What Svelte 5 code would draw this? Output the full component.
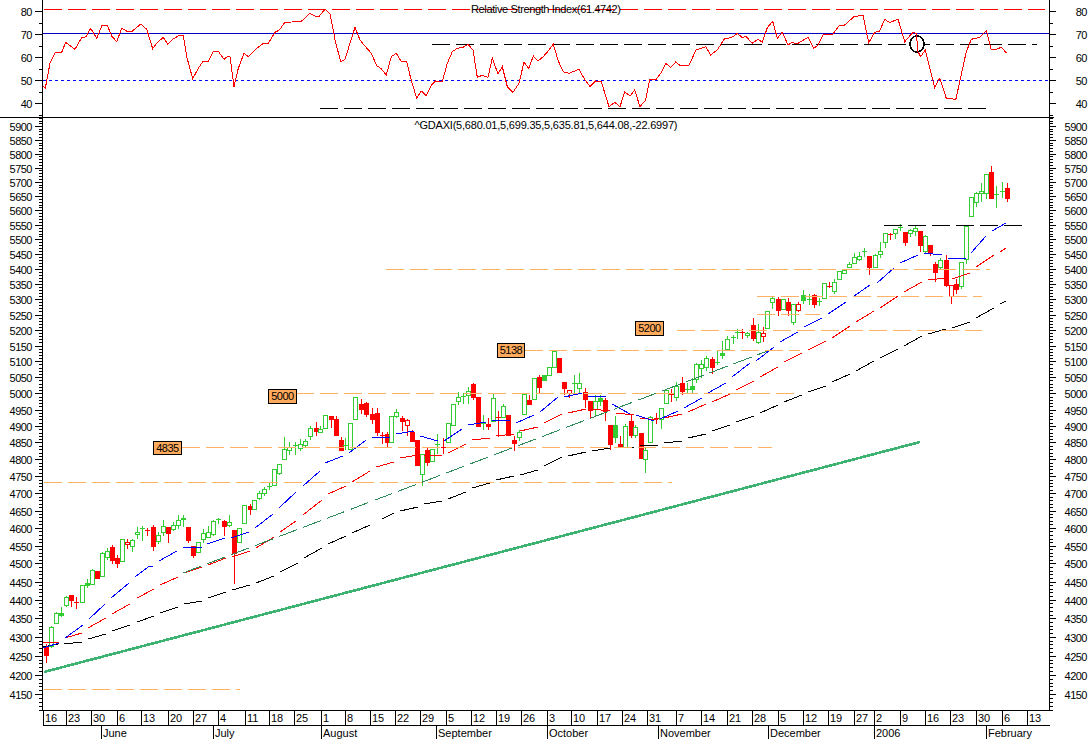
<script>
  const W = 1092, H = 739;
  const L = 42.5, R = 1049.5;

  // RSI series read per reference crop (3x crop units, x offset of the crop)
  const rsiParts = [
    [0, [128,258,136,265,150,190,165,158,185,157,197,127,225,148,245,113,258,110,272,85,290,115,306,76,322,76,335,108,350,125,365,85,385,96,395,95,422,72,440,88,458,146,470,130,490,112,503,133,518,118,535,108,550,106,560,170,578,236,595,205,608,185,625,185,640,154,655,154,672,178,685,168,690,170,702,260,715,205,732,160,745,170,770,145,790,130,805,130,825,97,838,90,855,67,875,66,905,63,930,40,945,48,958,48,975,28,990,42,1000,90,1005,120,1022,185,1035,178,1050,130,1065,82,1080,120,1092,135]],
    [364, [22,160,38,197,50,205,67,225,82,170,97,160,112,185,128,185,140,235,158,295,172,273,187,287,203,255,215,243,235,245,250,190,265,155,280,145,297,142,312,133,327,150,340,232,355,226,372,232,385,175,402,222,415,200,430,260,447,277,465,250,480,186,494,205,508,168,522,183,538,170,555,150,568,133,583,183,598,215,615,220,645,208,660,235,678,260,695,243,712,245,735,320,752,307,768,320,782,275,798,288,812,270,828,320,845,300,857,238,875,240,890,220,905,190,920,202,935,186,950,198,975,196,996,150,1025,140,1040,165,1060,150,1082,115]],
    [728, [0,115,15,110,28,100,42,112,55,110,72,130,90,118,103,127,118,83,134,64,148,115,163,97,180,135,192,127,207,132,240,112,257,145,270,135,287,102,315,102,335,75,350,75,378,50,405,46,422,128,440,97,455,93,470,58,485,68,510,57,530,125,555,97,565,100,570,155,578,170,592,150,620,262,635,235,655,295,670,295,683,300,715,155,730,118,755,112,775,92,790,150,805,148,820,142,836,160]]
  ];
  let rsiPts = [];
  for (const [ox, a] of rsiParts) {
    for (let i = 0; i < a.length; i += 2) rsiPts.push(`${(ox + a[i] / 3).toFixed(1)},${(a[i + 1] / 3).toFixed(1)}`);
  }
  const rsiLine = rsiPts.join(' ');

  // candles: x, bodyTop, bodyBottom, high, low, kind (g hollow green, G solid green, r solid red, h hollow red)
  const candles = [
    [46,646,655,644,662,'r'],[51,627,646,626,647,'g'],[56,613,623,612,623,'g'],[61,613,615,607,616,'G'],[66,597,605,596,606,'g'],[71,595,600,595,606,'r'],[76,602,602,597,608,'r'],[82,585,602,585,602,'g'],[87,583,585,579,587,'G'],[92,570,584,569,584,'g'],[97,571,578,571,578,'r'],[102,553,576,552,576,'g'],[107,551,557,548,559,'g'],[112,547,560,545,563,'r'],[117,558,563,555,567,'r'],[122,539,561,539,561,'g'],[127,542,544,539,548,'h'],[132,540,546,539,551,'g'],[137,532,534,527,538,'g'],[142,528,528,526,540,'G'],[147,530,530,528,535,'r'],[153,527,546,525,550,'r'],[158,535,541,532,543,'g'],[163,526,532,520,535,'g'],[168,527,533,527,542,'r'],[173,525,529,522,530,'g'],[178,520,525,515,528,'g'],[183,518,519,515,526,'G'],[188,527,540,527,542,'r'],[193,546,555,546,557,'r'],[198,542,552,542,552,'g'],[203,533,539,529,542,'g'],[208,532,537,526,537,'g'],[213,521,534,520,535,'g'],[218,519,519,518,523,'G'],[224,521,526,520,535,'r'],[229,522,525,515,526,'g'],[234,530,553,530,583,'r'],[239,528,542,528,542,'g'],[244,505,523,505,523,'g'],[250,506,509,504,514,'r'],[254,500,509,500,509,'g'],[259,493,498,491,499,'g'],[264,489,493,487,495,'g'],[269,486,486,482,489,'G'],[274,469,485,469,485,'g'],[279,464,473,464,474,'g'],[284,449,459,437,459,'g'],[289,447,450,442,454,'g'],[295,445,445,442,454,'G'],[300,444,448,439,450,'g'],[305,441,445,439,446,'g'],[310,428,436,426,439,'g'],[316,428,431,422,435,'r'],[320,429,432,426,432,'g'],[325,415,428,415,428,'g'],[331,416,419,416,427,'r'],[336,419,435,416,435,'r'],[341,440,450,437,450,'r'],[345,445,445,438,449,'G'],[350,423,449,423,449,'g'],[355,397,419,397,419,'g'],[361,404,409,399,413,'r'],[366,403,414,402,416,'r'],[372,414,419,408,423,'r'],[377,413,432,408,435,'r'],[382,435,435,432,443,'r'],[387,434,442,432,447,'r'],[391,416,442,416,442,'g'],[396,412,416,409,417,'g'],[402,418,421,416,430,'r'],[407,420,425,419,435,'h'],[412,432,441,430,441,'r'],[417,440,465,440,465,'r'],[422,454,474,454,485,'g'],[427,450,462,448,465,'r'],[432,449,461,449,461,'g'],[437,444,444,434,453,'G'],[443,447,447,438,453,'r'],[448,423,442,423,442,'g'],[453,404,425,404,425,'g'],[458,397,401,392,404,'g'],[463,396,396,393,403,'G'],[468,391,395,387,403,'g'],[473,384,397,383,399,'r'],[478,397,426,397,426,'r'],[483,423,423,415,429,'G'],[488,424,426,418,429,'r'],[493,398,421,394,421,'g'],[498,417,417,411,436,'r'],[503,406,417,404,417,'g'],[508,415,435,415,435,'r'],[514,440,443,436,450,'r'],[519,432,437,430,440,'g'],[524,394,414,394,414,'g'],[529,400,404,395,404,'r'],[534,378,399,378,399,'g'],[539,377,387,375,393,'r'],[544,375,380,375,380,'G'],[549,367,375,367,375,'g'],[554,351,367,351,367,'g'],[559,358,372,358,372,'r'],
    [564,382,388,382,394,'r'],[569,390,393,390,397,'h'],[574,383,383,375,392,'G'],[579,383,388,373,392,'g'],[585,392,399,388,407,'r'],[590,401,410,401,417,'r'],[595,401,409,395,415,'g'],[600,398,401,395,405,'G'],[605,400,411,398,420,'r'],[610,425,444,425,449,'r'],[615,425,437,416,442,'G'],[620,444,447,436,447,'r'],[625,426,447,424,447,'g'],[631,421,435,415,437,'r'],[635,427,435,425,437,'g'],[641,433,458,433,458,'r'],[645,450,459,447,472,'g'],[650,417,442,416,442,'g'],[656,418,418,413,423,'r'],[661,408,419,408,428,'g'],[666,390,403,390,403,'g'],[671,394,394,389,401,'r'],[676,386,397,382,400,'g'],[682,383,391,377,394,'r'],[687,389,389,383,393,'G'],[692,386,389,378,392,'G'],[696,364,379,363,382,'g'],[701,364,368,360,377,'g'],[706,358,367,356,370,'g'],[712,359,367,357,373,'r'],[717,362,362,350,364,'G'],[722,353,355,341,358,'G'],[727,339,349,336,350,'g'],[733,337,337,335,343,'G'],[737,332,332,329,338,'G'],[742,332,332,329,338,'r'],[747,333,335,332,337,'g'],[753,325,338,318,340,'r'],[758,332,342,324,343,'g'],[763,333,336,327,341,'h'],[767,311,328,311,328,'g'],[772,298,302,296,308,'g'],[778,299,310,297,315,'r'],[783,299,309,299,309,'g'],[788,302,310,298,315,'r'],[793,304,322,304,324,'g'],[798,304,310,302,311,'h'],[803,295,300,290,303,'G'],[809,299,299,294,304,'G'],[814,295,304,294,307,'r'],[819,301,301,298,305,'G'],[824,283,298,283,298,'g'],[829,286,286,282,287,'r'],[834,282,291,279,293,'g'],[839,271,279,271,279,'g'],[844,270,273,270,273,'g'],[849,264,267,262,267,'g'],[854,257,263,253,263,'g'],[859,256,259,252,260,'g'],[864,251,251,248,256,'G'],[869,256,267,256,274,'r'],[875,255,267,254,267,'g'],[880,251,254,242,257,'g'],[885,233,242,233,247,'g'],[890,234,234,233,239,'r'],[895,229,233,229,238,'g'],[900,227,227,224,230,'G'],[905,232,242,232,245,'r'],[910,230,233,229,236,'g'],[915,228,231,226,235,'g'],[920,231,245,231,251,'r'],[925,236,251,235,252,'g'],[930,245,252,245,255,'r'],[935,264,272,262,281,'r'],[940,260,267,258,268,'g'],[946,260,285,255,286,'r'],[951,285,296,285,303,'h'],[956,284,289,279,293,'r'],[961,262,286,262,288,'g'],[966,226,259,226,263,'g'],[971,197,216,197,216,'g'],[976,193,202,192,206,'g'],[981,191,193,183,201,'g'],[986,174,193,174,198,'g'],[991,172,198,166,198,'r'],[996,194,194,186,207,'G'],[1002,191,191,182,197,'G'],[1007,188,198,183,201,'r']
  ];

  const blue = [[43,648,59,643],[65,638,83,625],[89,619,105,604],[111,598,129,583],[135,577,148,567],[148,567,153,566],[159,561,177,551],[183,547,202,547],[207,544,225,538],[231,538,249,532],[255,528,273,514],[279,508,296,492],[303,486,320,471],[325,463,343,456],[349,453,366,440],[372,438,390,437],[396,434,414,431],[420,436,438,441],[444,441,462,429],[468,425,486,422],[492,421,510,420],[516,423,534,415],[540,412,558,397],[564,397,582,393],[588,396,606,397],[612,404,630,414],[636,415,654,421],[660,419,678,411],[684,408,702,398],[708,393,726,383],[732,377,750,363],[756,361,774,347],[780,342,798,332],[804,327,822,318],[828,314,846,302],[854,296,870,285],[877,283,894,268],[900,263,918,255],[924,253,942,255],[948,258,966,258],[971,253,986,236],[992,231,1006,223]];
  const red = [[43,643,59,642],[65,638,82,633],[88,628,106,618],[112,614,130,604],[137,598,154,589],[160,585,178,577],[184,573,202,567],[208,565,226,558],[232,557,250,551],[256,548,274,537],[280,532,296,521],[303,515,322,500],[328,494,346,486],[352,482,370,471],[376,467,394,462],[400,458,418,455],[424,456,442,455],[448,453,466,444],[472,440,490,438],[496,436,514,434],[520,431,538,427],[544,423,562,414],[568,413,586,409],[592,409,610,411],[616,413,634,415],[640,418,658,420],[664,418,682,414],[688,412,706,404],[712,402,730,394],[736,390,754,381],[760,377,778,367],[784,362,802,353],[808,350,826,341],[832,338,850,326],[856,322,874,311],[880,308,898,296],[904,292,922,282],[928,280,946,278],[952,279,970,273],[976,267,994,255],[1000,252,1006,248]];
  const black = [[43,647,58,644],[64,644,82,642],[88,639,106,634],[112,631,130,625],[137,622,154,616],[160,613,178,607],[184,604,202,601],[208,598,226,592],[232,590,250,585],[256,583,274,576],[280,572,298,563],[304,558,322,548],[328,544,346,536],[352,533,370,525],[382,519,394,513],[400,511,418,507],[424,504,442,501],[448,499,466,492],[472,488,490,483],[496,480,514,476],[520,475,538,470],[544,466,562,457],[568,456,586,452],[592,451,610,448],[616,447,634,447],[640,446,658,445],[664,443,682,441],[688,438,706,434],[712,431,730,425],[736,422,754,416],[760,413,778,405],[784,402,802,395],[808,392,826,386],[832,382,850,374],[856,371,874,361],[880,358,898,349],[904,346,922,336],[928,334,946,329],[952,328,970,322],[976,318,994,308],[1000,304,1006,301]];

  const levels = [
    { y: 482, a: 44, b: 672 }, { y: 689, a: 44, b: 240 }, { y: 447, a: 182, b: 772 },
    { y: 393, a: 296, b: 800 }, { y: 350, a: 525, b: 800 }, { y: 330, a: 677, b: 982 },
    { y: 296, a: 757, b: 982 }, { y: 269, a: 386, b: 990 }, { y: 314, a: 757, b: 820 }
  ];

  const tags = [
    { t: '4835', x: 153, y: 441, w: 28, h: 13 }, { t: '5000', x: 268, y: 389, w: 28, h: 14 },
    { t: '5138', x: 497, y: 343, w: 27, h: 14 }, { t: '5200', x: 635, y: 321, w: 28, h: 14 }
  ];

  const py = (p) => Math.round(126 + (Math.log(5900) - Math.log(p)) * 1615) + 0.5;
  const priceTicks = [];
  for (let p = 5930; p >= 4110; p -= 10) priceTicks.push({ y: py(p), major: p % 50 === 0 });
  const priceLabels = [];
  for (let p = 5900; p >= 4150; p -= 50) priceLabels.push({ p, y: py(p) });

  const rsiTicks = [];
  for (let v = 80; v >= 35; v -= 5) rsiTicks.push({ y: Math.round(11 + (80 - v) * 2.31) + 0.5, v, major: v % 10 === 0 });

  const days = [[43,'16'],[66,'23'],[91,'30'],[117,'6'],[141,'13'],[168,'20'],[193,'27'],[218,'4'],[245,'11'],[269,'18'],[294,'25'],[321,'1'],[345,'8'],[370,'15'],[395,'22'],[420,'29'],[446,'5'],[471,'12'],[496,'19'],[521,'26'],[547,'3'],[571,'10'],[597,'17'],[622,'24'],[647,'31'],[676,'7'],[701,'14'],[727,'21'],[752,'28'],[778,'5'],[803,'12'],[828,'19'],[854,'27'],[874,'2'],[900,'9'],[925,'16'],[950,'23'],[976,'30'],[1002,'6'],[1027,'13']];
  const months = [[101,'June'],[213,'July'],[321,'August'],[436,'September'],[547,'October'],[658,'November'],[768,'December'],[874,'2006'],[986,'February']];
  const snap = (v) => Math.round(v) + 0.5;
</script>

<svg class="chart" width={W} height={H} viewBox="0 0 {W} {H}" role="img" aria-label="DAX chart">
  <!-- candles -->
  {#each candles as [x, top, bot, hi, lo, kind]}
    <g class={kind === 'g' || kind === 'G' ? 'up' : 'down'}>
      <line x1={x + 0.5} x2={x + 0.5} y1={hi} y2={lo + 1} class="wick" />
      {#if top === bot}
        <line x1={x - 2} x2={x + 3} y1={top + 0.5} y2={top + 0.5} class="wick" />
      {:else if kind === 'g' || kind === 'h'}
        <rect x={x - 1.5} y={top + 0.5} width="4" height={bot - top} class="hollow" />
      {:else}
        <rect x={x - 2} y={top} width="5" height={bot - top + 1} class="solid" />
      {/if}
    </g>
  {/each}

  <!-- moving averages -->
  {#each black as [a, b, c, d]}<line x1={a} y1={b} x2={c} y2={d} class="ma-black" />{/each}
  {#each red as [a, b, c, d]}<line x1={a} y1={b} x2={c} y2={d} class="ma-red" />{/each}
  {#each blue as [a, b, c, d]}<line x1={a} y1={b} x2={c} y2={d} class="ma-blue" />{/each}

  <!-- trend lines -->
  <line x1="183" y1="573" x2="770" y2="350" class="trend-thin" />
  <line x1="44" y1="672" x2="920" y2="442" class="trend-thick" />

  <!-- support and resistance levels -->
  {#each levels as l}
    <line x1={l.a} x2={l.b} y1={l.y + 0.5} y2={l.y + 0.5} class="level" />
  {/each}
  <line x1="884" x2="1022" y1="225.5" y2="225.5" class="dash-black wide" />

  {#each tags as tag}
    <rect x={tag.x + 0.5} y={tag.y + 0.5} width={tag.w} height={tag.h} class="tag" />
    <text x={tag.x + tag.w / 2 + 0.5} y={tag.y + 11} class="label mid">{tag.t}</text>
  {/each}

  <text x="546" y="129" class="label mid title" textLength="263" lengthAdjust="spacing">^GDAXI(5,680.01,5,699.35,5,635.81,5,644.08,-22.6997)</text>

  <!-- RSI panel -->
  <line x1="44" x2="1045" y1="9.5" y2="9.5" class="dash-red" />
  <line x1={L} x2={R} y1="33.5" y2="33.5" class="solid-blue" />
  <line x1={L} x2={R} y1="80.5" y2="80.5" class="dot-blue" />
  <line x1="432" x2="1037" y1="44.5" y2="44.5" class="dash-black" />
  <line x1="320" x2="986" y1="108.5" y2="108.5" class="dash-black" />
  <ellipse cx="917" cy="44" rx="7" ry="8" class="marker" />
  <polyline points={rsiLine} class="rsi" />
  <text x="546" y="13" class="label mid title" textLength="150" lengthAdjust="spacing">Relative Strength Index(61.4742)</text>

  <!-- axes -->
  <line x1={L} x2={L} y1="0" y2="710" class="axis" />
  <line x1={R} x2={R} y1="0" y2="710" class="axis" />
  <line x1="0" x2="1054" y1="117.5" y2="117.5" class="axis" />
  <line x1={L} x2={R} y1="710.5" y2="710.5" class="axis" />
  <line x1={L} x2={R} y1="725.5" y2="725.5" class="axis" />

  {#each rsiTicks as t}
    <line x1={t.major ? 35 : 39} x2={L} y1={t.y} y2={t.y} class="axis" />
    <line x1={R} x2={t.major ? 1056 : 1053} y1={t.y} y2={t.y} class="axis" />
    {#if t.major}
      <text x="32" y={t.y + 4} class="label end">{t.v}</text>
      <text x="1087" y={t.y + 4} class="label end">{t.v}</text>
    {/if}
  {/each}

  {#each priceTicks as t}
    <line x1={t.major ? 35 : 39} x2={L} y1={t.y} y2={t.y} class="axis" />
    <line x1={R} x2={t.major ? 1056 : 1053} y1={t.y} y2={t.y} class="axis" />
  {/each}
  {#each priceLabels as l}
    <text x="32" y={l.y + 4.5} class="label end">{l.p}</text>
    <text x="1087" y={l.y + 4.5} class="label end">{l.p}</text>
  {/each}

  <!-- time axis -->
  {#each days as [x, d]}
    <line x1={snap(x)} x2={snap(x)} y1="711" y2="725" class="axis" />
    <text x={x + 2} y="722" class="label time">{d}</text>
  {/each}
  {#each months as [x, m]}
    <line x1={snap(x)} x2={snap(x)} y1="725" y2="739" class="axis" />
    <text x={x + 2} y="737" class="label time">{m}</text>
  {/each}
</svg>

<style>
  :global(body) {
    margin: 0;
    background: #fff;
  }
  .chart {
    display: block;
    background: #fff;
    shape-rendering: crispEdges;
  }
  .label {
    font-family: "Liberation Sans", Arial, sans-serif;
    font-size: 11px;
    letter-spacing: -0.5px;
    fill: #000;
  }
  .title {
    letter-spacing: normal;
  }
  .time {
    letter-spacing: 0;
  }
  .end { text-anchor: end; }
  .mid { text-anchor: middle; }

  .up .wick { stroke: #33cc33; stroke-width: 1; }
  .down .wick { stroke: #ff0000; stroke-width: 1; }
  .up .hollow { fill: #fff; stroke: #33cc33; stroke-width: 1; }
  .down .hollow { fill: #fff; stroke: #ff0000; stroke-width: 1; }
  .up .solid { fill: #33cc33; }
  .down .solid { fill: #ff0000; }

  .ma-black { stroke: #000; stroke-width: 1; }
  .ma-red { stroke: #ff0000; stroke-width: 1; }
  .ma-blue { stroke: #0000ff; stroke-width: 1; }

  .trend-thin {
    stroke: #2e8b57;
    stroke-width: 1;
    stroke-dasharray: 19.2 6.4;
  }
  .trend-thick {
    stroke: #3cb371;
    stroke-width: 2.6;
  }
  .level {
    stroke: #ffb264;
    stroke-width: 1;
    stroke-dasharray: 18 6;
  }
  .tag {
    fill: #ffaa5c;
    stroke: #000;
    stroke-width: 1;
  }
  .dash-black {
    stroke: #000;
    stroke-width: 1;
    stroke-dasharray: 18 6;
  }
  .dash-black.wide {
    stroke-width: 1.5;
  }
  .dash-red {
    stroke: #ff0000;
    stroke-width: 1;
    stroke-dasharray: 18 6;
  }
  .solid-blue {
    stroke: #0000c8;
    stroke-width: 1;
  }
  .dot-blue {
    stroke: #0000ff;
    stroke-width: 1;
    stroke-dasharray: 3 3;
  }
  .rsi {
    fill: none;
    stroke: #ff0000;
    stroke-width: 1;
  }
  .marker {
    fill: #fff;
    stroke: #000;
    stroke-width: 1.7;
  }
  .axis {
    stroke: #000;
    stroke-width: 1;
  }
</style>
